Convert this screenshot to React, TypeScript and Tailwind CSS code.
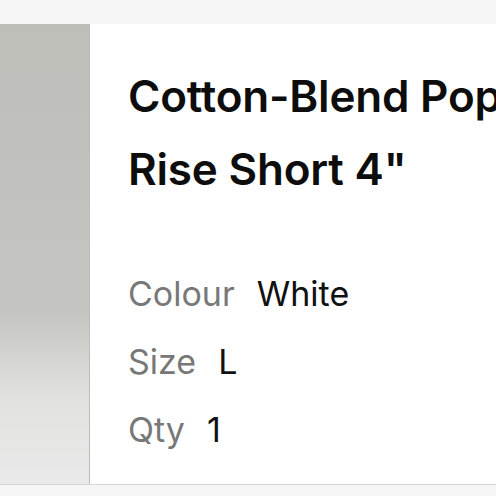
import React from "react";

export default function App() {
  const rows = [
    ["Colour", "White"],
    ["Size", "L"],
    ["Qty", "1"],
  ];
  return (
    <div
      className="w-[496px] h-[496px] bg-[#f5f5f5] flex flex-col overflow-hidden"
      style={{ fontFamily: "Inter, 'Noto Sans', sans-serif" }}
    >
      <div className="h-[24px] shrink-0" />
      <div className="flex h-[461px] shrink-0 border-b border-[#d6d6d6] bg-white">
        <div className="w-[90px] shrink-0 bg-[linear-gradient(180deg,#bebeb9_0%,#c4c4c0_62%,#e2e2e1_82%,#e9e9e9_100%)] border-r border-[#bcbcb8]" />
        <div className="flex-1 pl-[38px] pt-[36px] min-w-0 overflow-hidden">
          <div className="text-[44px] leading-[73px] font-semibold text-[#0d0d0d] whitespace-nowrap tracking-[-0.2px]">
            <div>Cotton-Blend Poplin Mid-</div>
            <div>Rise Short 4"</div>
          </div>
          <div className="mt-[54px] flex flex-col">
            {rows.map(([k, v]) => (
              <div key={k} className="flex text-[34px] leading-[68px]">
                <span className="text-[#787878]">{k}</span>
                <span className="ml-[22px] text-[#111]">{v}</span>
              </div>
            ))}
          </div>
        </div>
      </div>
    </div>
  );
}
